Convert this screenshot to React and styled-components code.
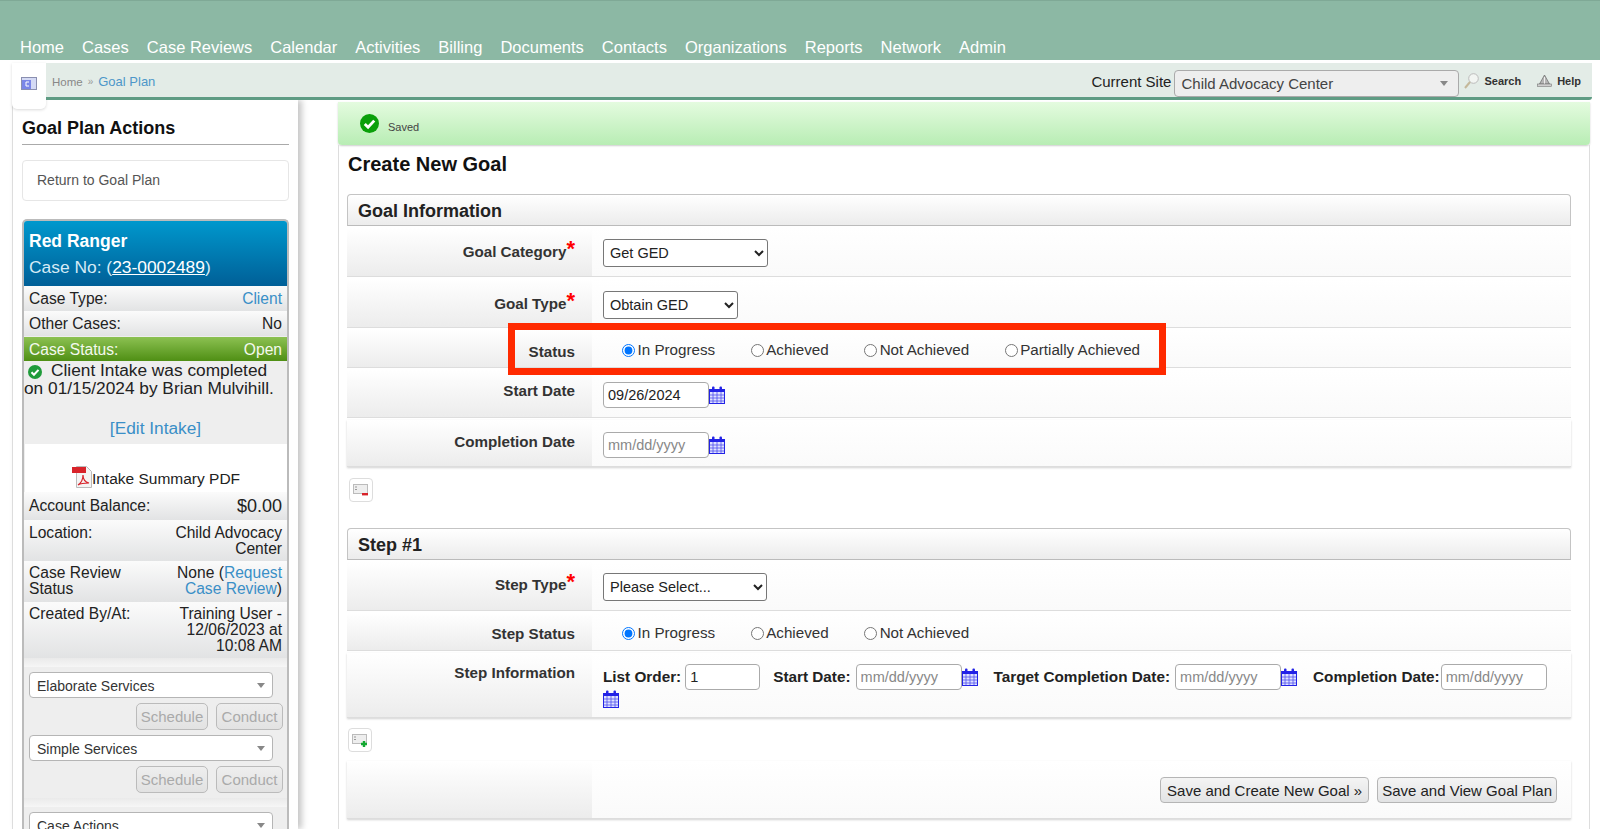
import React from "react";
import styled, { createGlobalStyle } from "styled-components";

const GlobalStyle = createGlobalStyle`
  html, body { margin: 0; padding: 0; height: 100%; overflow: hidden; background: #fff; }
  body { font-family: "Liberation Sans", Arial, sans-serif; color: #222; }
  * { box-sizing: border-box; }
`;

const Page = styled.div`
  height: 829px;
  overflow: hidden;
  display: flex;
  flex-direction: column;
`;

const TopNav = styled.nav`
  height: 60px;
  flex: none;
  background: #8cb8a4;
  border-top: 1px solid #7fa996;
  display: flex;
  align-items: flex-end;
  gap: 18px;
  padding: 0 0 4px 20px;
`;

const NavLink = styled.a`
  color: #fff;
  font-size: 16.5px;
  line-height: 18px;
`;

const SubHeader = styled.div`
  flex: none;
  height: 37px;
  margin-top: 3px;
  padding: 0 8px 0 12px;
  display: flex;
  position: relative;
  z-index: 3;
`;

const HomeTab = styled.div`
  width: 34px;
  height: 46px;
  flex: none;
  background: #fff;
  border-radius: 0 0 5px 5px;
  box-shadow: 0 1px 3px rgba(0, 0, 0, 0.15);
  padding: 14px 0 0 9px;
`;

const CrumbBar = styled.div`
  flex: 1;
  background: #e3ece7;
  border-bottom: 3px solid #5f9c84;
  border-radius: 0 0 3px 0;
  display: flex;
  align-items: center;
  padding: 3px 11px 0 6px;
`;

const CrumbHome = styled.span`
  color: #888;
  font-size: 11.5px;
`;

const CrumbSep = styled.span`
  color: #999;
  font-size: 10px;
  margin: 0 5px;
`;

const CrumbLink = styled.a`
  color: #4d97c9;
  font-size: 13px;
  flex: 1;
`;

const SiteLabel = styled.span`
  font-size: 15px;
  color: #222;
`;

const SiteSelect = styled.div`
  width: 285px;
  height: 27px;
  margin: 4px 5px 0 3px;
  background: #eee;
  border: 1px solid #aaa;
  border-radius: 4px;
  color: #444;
  font-size: 15px;
  line-height: 26px;
  padding: 0 7px 0 6px;
  display: flex;
  justify-content: space-between;
  align-items: center;
`;

const Caret = styled.i`
  width: 0;
  height: 0;
  border-left: 4px solid transparent;
  border-right: 4px solid transparent;
  border-top: 5px solid #888;
  margin-right: 3px;
`;

const ToolLink = styled.a`
  display: flex;
  align-items: center;
  gap: 5px;
  font-size: 11px;
  font-weight: bold;
  color: #333;
  margin-left: ${(p) => p.$left || 0}px;
  margin-top: -2px;
`;

const Columns = styled.div`
  flex: 1;
  min-height: 0;
  display: flex;
  gap: 40px;
  padding: 0 10px 0 12px;
`;

const Sidebar = styled.aside`
  width: 286px;
  flex: none;
  background: #fff;
  border-left: 1px solid #ddd;
  box-shadow: 4px 0 6px rgba(0, 0, 0, 0.22);
  padding: 18px 9px 0 9px;
`;

const SideTitle = styled.h2`
  margin: 0;
  height: 27px;
  font-size: 18px;
  line-height: 20px;
  color: #111;
  border-bottom: 1px solid #aaa;
`;

const ReturnBox = styled.div`
  margin-top: 15px;
  height: 41px;
  border: 1px solid #e6e6e6;
  border-radius: 4px;
  font-size: 14px;
  line-height: 39px;
  color: #555;
  padding-left: 14px;
`;

const CaseCard = styled.div`
  margin-top: 18px;
  border: 2px solid #bbb;
  border-bottom: 0;
  border-radius: 5px 5px 0 0;
  background: #eee;
`;

const CaseHead = styled.div`
  height: 65px;
  background: linear-gradient(#0098cd, #005f97);
  border-radius: 3px 3px 0 0;
  padding: 10px 5px 0;
  color: #d5ebf6;
`;

const CaseName = styled.div`
  font-size: 17.5px;
  font-weight: bold;
  line-height: 20px;
  color: #fff;
`;

const CaseNumber = styled.div`
  font-size: 17.4px;
  line-height: 20px;
  margin-top: 6px;
  u { color: #fff; }
`;

const InfoRow = styled.div`
  display: flex;
  justify-content: space-between;
  gap: 6px;
  height: ${(p) => p.$h}px;
  padding: ${(p) => p.$pad ?? 4}px 5px 0;
  font-size: 15.6px;
  line-height: 16px;
  background: ${(p) =>
    p.$green
      ? "linear-gradient(#8cc152, #4f8f14)"
      : "linear-gradient(#fbfbfb, #e2e3e4)"};
  color: ${(p) => (p.$green ? "#f4f9ee" : "#222")};
  margin-top: ${(p) => (p.$green ? 1 : 0)}px;
`;

const InfoLabel = styled.span`
  max-width: ${(p) => p.$max || 118}px;
`;

const InfoValue = styled.span`
  max-width: 126px;
  text-align: right;
  font-size: ${(p) => p.$size || 15.6}px;
`;

const BlueLink = styled.a`
  color: #3a8fc7;
`;

const IntakeNote = styled.div`
  height: 83px;
  background: #eee;
  font-size: 17.3px;
  line-height: 18px;
  color: #222;
  svg { margin: 0 9px 0 4px; vertical-align: -3px; }
`;

const EditLine = styled.div`
  text-align: center;
  margin-top: 22px;
`;

const PdfBlock = styled.div`
  height: 48px;
  margin-left: 1px;
  background: #fff;
  display: flex;
  justify-content: center;
  align-items: flex-end;
  font-size: 15.5px;
  line-height: 20px;
  padding-bottom: 3px;
`;

const Band = styled.div`
  height: 9px;
  background: linear-gradient(#eaeaea, #f6f6f6);
`;

const ServicePanel = styled.div`
  background: #eee;
  padding: 5px 4px 0 5px;
`;

const ServiceSelect = styled.div`
  width: 244px;
  height: 26px;
  background: #fff;
  border: 1px solid #b5b5b5;
  border-radius: 4px;
  font-size: 14px;
  color: #333;
  padding: 1px 4px 0 7px;
  display: flex;
  justify-content: space-between;
  align-items: center;
`;

const ServiceButtons = styled.div`
  display: flex;
  justify-content: flex-end;
  gap: 8px;
  margin: 5px 0;
`;

const GhostButton = styled.button`
  height: 27px;
  width: ${(p) => p.$w}px;
  padding: 0;
  font-family: inherit;
  font-size: 15px;
  color: #aaa;
  background: linear-gradient(#eee, #e2e2e2);
  border: 1px solid #bbb;
  border-radius: 5px;
`;

const Main = styled.main`
  flex: 1;
  min-width: 0;
  padding-top: 2px;
`;

const SavedBanner = styled.div`
  height: 43px;
  background: linear-gradient(#e4fbdf, #b8edb4);
  border-radius: 0 0 4px 4px;
  box-shadow: 0 1px 2px rgba(0, 0, 0, 0.2);
  display: flex;
  align-items: flex-start;
  padding: 12px 0 0 22px;
  gap: 9px;
  font-size: 11px;
  color: #444;
  span { margin-top: 7px; }
`;

const Panel = styled.div`
  height: 700px;
  border-left: 1px solid #ddd;
  border-right: 1px solid #ddd;
  padding: 8px 18px 0 8px;
`;

const Heading = styled.h1`
  margin: 0;
  height: 41px;
  font-size: 20px;
  line-height: 22px;
  color: #111;
  padding-left: 1px;
`;

const SectionHead = styled.div`
  height: 32px;
  margin-bottom: 2px;
  background: linear-gradient(#fff, #ececec);
  border: 1px solid #c4c4c4;
  border-bottom-color: #bbb;
  border-radius: 4px 4px 0 0;
  font-size: 18px;
  font-weight: bold;
  line-height: 33px;
  color: #222;
  padding-left: 10px;
`;

const FormRow = styled.div`
  position: relative;
  display: grid;
  grid-template-columns: 245px 1fr;
  height: ${(p) => p.$h}px;
  margin-bottom: 2px;
  border-bottom: 1px solid #ddd;
  box-shadow: ${(p) => (p.$last ? "0 1px 2px rgba(0,0,0,0.18)" : "none")};
`;

const LabelCell = styled.div`
  background: linear-gradient(#fff, #ececec);
  text-align: right;
  font-size: 15.2px;
  font-weight: bold;
  line-height: 18px;
  color: #333;
  padding: ${(p) => p.$top ?? 12}px 17px 0 0;
`;

const Required = styled.span`
  color: #f00;
  font-size: 22px;
  line-height: 0;
  position: relative;
  top: -1px;
`;

const ValueCell = styled.div`
  background: linear-gradient(#fff, #fafafa);
  padding: ${(p) => p.$top ?? 11}px 10px 0 11px;
`;

const NativeSelect = styled.select`
  display: block;
  width: ${(p) => p.$w}px;
  height: 28px;
  font-family: inherit;
  font-size: 14.5px;
  color: #222;
  background: #fff;
  border: 1px solid #777;
  border-radius: 3px;
  padding-left: 2px;
`;

const RadioGroup = styled.div`
  display: flex;
  gap: 35.5px;
  padding-left: 19px;
`;

const RadioOption = styled.label`
  display: flex;
  align-items: center;
  gap: 2.5px;
  font-size: 15.2px;
  line-height: 18px;
  color: #333;
  input { margin: 1px 0 0; width: 13px; height: 13px; }
`;

const DateLine = styled.div`
  display: flex;
  align-items: center;
  flex-wrap: wrap;
`;

const TextBox = styled.input`
  width: ${(p) => p.$w || 106}px;
  height: 26px;
  font-family: inherit;
  font-size: 14.5px;
  color: #222;
  background: #fff;
  border: 1px solid #aaa;
  border-radius: 4px;
  padding: 0 4px;
  &::placeholder { color: #888; }
`;

const StepField = styled.label`
  display: flex;
  align-items: center;
  font-size: 15.3px;
  font-weight: bold;
  color: #222;
  margin-left: ${(p) => p.$left ?? 0}px;
  margin-right: ${(p) => p.$right ?? 0}px;
  gap: ${(p) => p.$gap ?? 4}px;
`;

const StepGrid = styled.div`
  display: flex;
  flex-wrap: wrap;
  align-items: center;
  width: 955px;
`;

const IconButton = styled.button`
  display: block;
  width: 24px;
  height: 24px;
  margin: ${(p) => p.$margin};
  padding: 3px;
  background: #fff;
  border: 1px solid #ddd;
  border-radius: 4px;
`;

const SaveBar = styled.div`
  display: flex;
  justify-content: flex-end;
  gap: 8px;
  padding-right: 4px;
`;

const SaveButton = styled.button`
  height: 26px;
  padding: 0 ${(p) => p.$pad || 4}px;
  font-family: inherit;
  font-size: 15px;
  color: #222;
  background: linear-gradient(#f4f4f4, #e2e3e4);
  border: 1px solid #b5b5b5;
  border-radius: 4px;
  white-space: nowrap;
`;

const Highlight = styled.div`
  position: absolute;
  z-index: 2;
  left: 161px;
  top: -7px;
  width: 658px;
  height: 52px;
  border: 7px solid #ff2a00;
  pointer-events: none;
`;

const CalendarIcon = () => (
  <svg width="16" height="18" viewBox="0 0 16 18" style={{ flex: "none", display: "block" }}>
    <rect x="0.5" y="3.5" width="15" height="14" fill="#dfe3ff" stroke="#2323e6" />
    <rect x="0.5" y="3" width="15" height="3" fill="#2323e6" />
    <rect x="3" y="0.5" width="2.5" height="4.5" rx="1" fill="#2323e6" />
    <rect x="10.5" y="0.5" width="2.5" height="4.5" rx="1" fill="#2323e6" />
    <path d="M4 6v11M8 6v11M12 6v11M1 9h14M1 12h14M1 15h14" stroke="#5050ee" strokeWidth="0.8" />
  </svg>
);

const CheckBadge = ({ size, color }) => (
  <svg width={size} height={size} viewBox="0 0 20 20">
    <circle cx="10" cy="10" r="10" fill={color} />
    <path d="M5 10.5l3.5 3.5L15 7" fill="none" stroke="#fff" strokeWidth="3" />
  </svg>
);

const PdfIcon = () => (
  <svg width="20" height="22" viewBox="0 0 20 22" style={{ marginBottom: 1 }}>
    <path d="M4.5 .5h10l5 5v16h-15z" fill="#f4f4f4" stroke="#bbb" />
    <rect x="0" y="1" width="14" height="6" fill="#d8232a" />
    <path d="M6 19c3-2 5-6 5-10 0 4 2 7 6 8-4 0-8 0-11 2z" fill="none" stroke="#d8232a" strokeWidth="1.2" />
  </svg>
);

const TabGlyph = () => (
  <svg width="16" height="13" viewBox="0 0 16 13" style={{ display: "block" }}>
    <rect x="0.5" y="0.5" width="15" height="12" fill="#d4daf5" stroke="#8a8fb0" />
    <rect x="1" y="3" width="9" height="9" fill="#7a86e8" />
    <path d="M8 5H5v4h3" fill="none" stroke="#fff" strokeWidth="1" />
  </svg>
);

const SearchGlyph = () => (
  <svg width="15" height="16" viewBox="0 0 15 16">
    <circle cx="9.5" cy="5.5" r="4.8" fill="#f2f5f2" stroke="#bbb" />
    <path d="M6 9l-5 6" stroke="#c4b89a" strokeWidth="2" />
  </svg>
);

const BellGlyph = () => (
  <svg width="15" height="13" viewBox="0 0 15 13">
    <path d="M7.5 1L12.5 10H2.5z" fill="#b5b5b5" stroke="#666" strokeWidth="0.7" />
    <path d="M7.5 3v7" stroke="#eee" strokeWidth="1" />
    <rect x="0.5" y="10" width="14" height="2.4" fill="#cfcfcf" stroke="#777" strokeWidth="0.6" />
  </svg>
);

const RowGlyph = ({ add }) => (
  <svg width="16" height="15" viewBox="0 0 16 15" style={{ display: "block" }}>
    <rect x="0.5" y="1.5" width="14" height="9" fill="#eee" stroke="#bbb" />
    <path d="M2 4h2M2 6.5h2" stroke="#999" />
    {add ? (
      <path d="M12 8v6M9 11h6" stroke="#14a832" strokeWidth="2.4" />
    ) : (
      <rect x="9" y="10" width="6" height="2.4" fill="#d8232a" />
    )}
  </svg>
);

const navItems = [
  "Home", "Cases", "Case Reviews", "Calendar", "Activities", "Billing",
  "Documents", "Contacts", "Organizations", "Reports", "Network", "Admin",
];

const Radios = ({ items }) => (
  <RadioGroup>
    {items.map((item, i) => (
      <RadioOption key={item}>
        <input type="radio" readOnly checked={i === 0} />
        {item}
      </RadioOption>
    ))}
  </RadioGroup>
);

const ServiceChoice = ({ name }) => (
  <>
    <ServiceSelect>
      {name}
      <Caret />
    </ServiceSelect>
    <ServiceButtons>
      <GhostButton $w={72} disabled>Schedule</GhostButton>
      <GhostButton $w={67} disabled>Conduct</GhostButton>
    </ServiceButtons>
  </>
);

export default function App() {
  return (
    <Page>
      <GlobalStyle />
      <TopNav>
        {navItems.map((item) => (
          <NavLink key={item}>{item}</NavLink>
        ))}
      </TopNav>

      <SubHeader>
        <HomeTab>
          <TabGlyph />
        </HomeTab>
        <CrumbBar>
          <CrumbHome>Home</CrumbHome>
          <CrumbSep>»</CrumbSep>
          <CrumbLink>Goal Plan</CrumbLink>
          <SiteLabel>Current Site</SiteLabel>
          <SiteSelect>
            Child Advocacy Center
            <Caret />
          </SiteSelect>
          <ToolLink>
            <SearchGlyph />
            Search
          </ToolLink>
          <ToolLink $left={16}>
            <BellGlyph />
            Help
          </ToolLink>
        </CrumbBar>
      </SubHeader>

      <Columns>
        <Sidebar>
          <SideTitle>Goal Plan Actions</SideTitle>
          <ReturnBox>Return to Goal Plan</ReturnBox>
          <CaseCard>
            <CaseHead>
              <CaseName>Red Ranger</CaseName>
              <CaseNumber>
                Case No: (<u>23-0002489</u>)
              </CaseNumber>
            </CaseHead>
            <InfoRow $h={25} $pad={5}>
              <InfoLabel>Case Type:</InfoLabel>
              <BlueLink>Client</BlueLink>
            </InfoRow>
            <InfoRow $h={25} $pad={5}>
              <InfoLabel>Other Cases:</InfoLabel>
              <InfoValue>No</InfoValue>
            </InfoRow>
            <InfoRow $h={24} $pad={5} $green>
              <InfoLabel>Case Status:</InfoLabel>
              <InfoValue>Open</InfoValue>
            </InfoRow>
            <IntakeNote>
              <CheckBadge size={14} color="#1f9b3a" />
              Client Intake was completed on 01/15/2024 by Brian Mulvihill.
              <EditLine>
                <BlueLink>[Edit Intake]</BlueLink>
              </EditLine>
            </IntakeNote>
            <PdfBlock>
              <PdfIcon />
              Intake Summary PDF
            </PdfBlock>
            <InfoRow $h={28} $pad={6}>
              <InfoLabel $max={140}>Account Balance:</InfoLabel>
              <InfoValue $size={18}>$0.00</InfoValue>
            </InfoRow>
            <InfoRow $h={41} $pad={5}>
              <InfoLabel>Location:</InfoLabel>
              <InfoValue>Child Advocacy Center</InfoValue>
            </InfoRow>
            <InfoRow $h={41}>
              <InfoLabel>Case Review Status</InfoLabel>
              <InfoValue>
                None (<BlueLink>Request Case Review</BlueLink>)
              </InfoValue>
            </InfoRow>
            <InfoRow $h={56}>
              <InfoLabel>Created By/At:</InfoLabel>
              <InfoValue>Training User - 12/06/2023 at 10:08 AM</InfoValue>
            </InfoRow>
            <Band />
            <ServicePanel>
              <ServiceChoice name="Elaborate Services" />
              <ServiceChoice name="Simple Services" />
            </ServicePanel>
            <Band />
            <ServicePanel>
              <ServiceSelect>
                Case Actions
                <Caret />
              </ServiceSelect>
            </ServicePanel>
          </CaseCard>
        </Sidebar>

        <Main>
          <SavedBanner>
            <CheckBadge size={19} color="#0a9f0a" />
            <span>Saved</span>
          </SavedBanner>
          <Panel>
            <Heading>Create New Goal</Heading>

            <SectionHead>Goal Information</SectionHead>
            <FormRow $h={49}>
              <LabelCell $top={15}>
                Goal Category<Required>*</Required>
              </LabelCell>
              <ValueCell>
                <NativeSelect $w={165} defaultValue="Get GED">
                  <option>Get GED</option>
                </NativeSelect>
              </ValueCell>
            </FormRow>
            <FormRow $h={49}>
              <LabelCell $top={16}>
                Goal Type<Required>*</Required>
              </LabelCell>
              <ValueCell $top={12}>
                <NativeSelect $w={135} defaultValue="Obtain GED">
                  <option>Obtain GED</option>
                </NativeSelect>
              </ValueCell>
            </FormRow>
            <FormRow $h={38}>
              <LabelCell $top={13}>Status</LabelCell>
              <ValueCell>
                <Radios items={["In Progress", "Achieved", "Not Achieved", "Partially Achieved"]} />
              </ValueCell>
              <Highlight />
            </FormRow>
            <FormRow $h={48}>
              <LabelCell>Start Date</LabelCell>
              <ValueCell $top={12}>
                <DateLine>
                  <TextBox readOnly value="09/26/2024" />
                  <CalendarIcon />
                </DateLine>
              </ValueCell>
            </FormRow>
            <FormRow $h={47} $last>
              <LabelCell $top={13}>Completion Date</LabelCell>
              <ValueCell $top={12}>
                <DateLine>
                  <TextBox readOnly placeholder="mm/dd/yyyy" />
                  <CalendarIcon />
                </DateLine>
              </ValueCell>
            </FormRow>
            <IconButton $margin="11px 0 26px 2px">
              <RowGlyph />
            </IconButton>

            <SectionHead>Step #1</SectionHead>
            <FormRow $h={49}>
              <LabelCell $top={14}>
                Step Type<Required>*</Required>
              </LabelCell>
              <ValueCell>
                <NativeSelect $w={164} defaultValue="Please Select...">
                  <option>Please Select...</option>
                </NativeSelect>
              </ValueCell>
            </FormRow>
            <FormRow $h={38}>
              <LabelCell>Step Status</LabelCell>
              <ValueCell>
                <Radios items={["In Progress", "Achieved", "Not Achieved"]} />
              </ValueCell>
            </FormRow>
            <FormRow $h={65} $last>
              <LabelCell $top={11}>Step Information</LabelCell>
              <ValueCell>
                <StepGrid>
                  <StepField $right={13}>
                    List Order:
                    <TextBox $w={75} readOnly value="1" />
                  </StepField>
                  <StepField $gap={5}>
                    Start Date:
                    <TextBox readOnly placeholder="mm/dd/yyyy" />
                  </StepField>
                  <CalendarIcon />
                  <StepField $left={16} $gap={5}>
                    Target Completion Date:
                    <TextBox readOnly placeholder="mm/dd/yyyy" />
                  </StepField>
                  <CalendarIcon />
                  <StepField $left={16} $gap={1}>
                    Completion Date:
                    <TextBox readOnly placeholder="mm/dd/yyyy" />
                  </StepField>
                  <CalendarIcon />
                </StepGrid>
              </ValueCell>
            </FormRow>
            <IconButton $margin="10px 0 9px 1px">
              <RowGlyph add />
            </IconButton>
            <FormRow $h={58} $last>
              <LabelCell />
              <ValueCell $top={16}>
                <SaveBar>
                  <SaveButton $pad={6}>Save and Create New Goal »</SaveButton>
                  <SaveButton>Save and View Goal Plan</SaveButton>
                </SaveBar>
              </ValueCell>
            </FormRow>
          </Panel>
        </Main>
      </Columns>
    </Page>
  );
}
